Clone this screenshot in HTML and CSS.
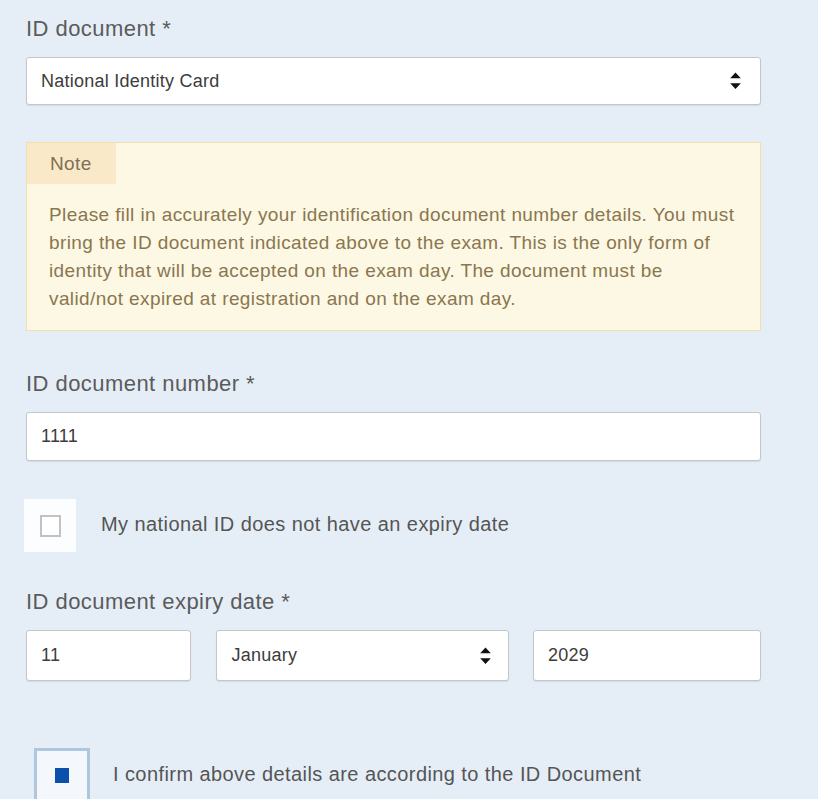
FILE: index.html
```html
<!DOCTYPE html>
<html lang="en">
<head>
<meta charset="utf-8">
<title>ID document</title>
<link rel="stylesheet" href="styles.css">
</head>
<body>
<form class="form">
  <div class="field field-first">
    <div class="label">ID document *</div>
    <div class="select">
      <span class="value">National Identity Card</span>
      <svg class="arrows" width="11" height="18" viewBox="0 0 11 18"><path d="M5.5 0.5 L10.8 6.2 H0.2 Z M0.2 11.3 H10.8 L5.5 17 Z" fill="#111"/></svg>
    </div>
  </div>

  <div class="note">
    <div class="note-tab">Note</div>
    <p class="note-body">Please fill in accurately your identification document number details. You must bring the ID document indicated above to the exam. This is the only form of identity that will be accepted on the exam day. The document must be valid/not expired at registration and on the exam day.</p>
  </div>

  <div class="field field-number">
    <div class="label">ID document number *</div>
    <div class="input"><span class="value">1111</span></div>
  </div>

  <div class="check-row">
    <div class="check-box"><span class="check-square"></span></div>
    <span class="check-label">My national ID does not have an expiry date</span>
  </div>

  <div class="field field-expiry">
    <div class="label">ID document expiry date *</div>
    <div class="date-row">
      <div class="input day"><span class="value">11</span></div>
      <div class="select month">
        <span class="value">January</span>
        <svg class="arrows" width="11" height="18" viewBox="0 0 11 18"><path d="M5.5 0.5 L10.8 6.2 H0.2 Z M0.2 11.3 H10.8 L5.5 17 Z" fill="#111"/></svg>
      </div>
      <div class="input year"><span class="value">2029</span></div>
    </div>
  </div>

  <div class="confirm-row">
    <div class="confirm-box"><span class="confirm-mark"></span></div>
    <span class="check-label">I confirm above details are according to the ID Document</span>
  </div>
</form>
</body>
</html>
```

FILE: styles.css
```css
html, body {
  margin: 0;
  padding: 0;
  background: #e5eef7;
}

body {
  font-family: "Liberation Sans", Arial, sans-serif;
  color: #555;
  overflow: hidden;
}

.form {
  width: 735px;
  padding: 16px 0 0 26px;
}

.label {
  font-size: 22px;
  line-height: 26px;
  letter-spacing: 0.45px;
  color: #5b5b5b;
  margin-bottom: 15px;
}

.select,
.input {
  box-sizing: border-box;
  height: 49px;
  background: #fff;
  border: 1px solid #c4c7ca;
  border-radius: 3px;
  box-shadow: 0 1px 1px rgba(0, 0, 0, 0.08);
  display: flex;
  align-items: center;
  padding: 0 19px 0 14px;
}

.select {
  justify-content: space-between;
  height: 48px;
}

.value {
  font-size: 18px;
  letter-spacing: 0.25px;
  color: #3c3c3c;
}

.arrows {
  display: block;
}

.note {
  margin-top: 37px;
  box-sizing: border-box;
  height: 189px;
  background: #fdf8e3;
  border: 1px solid #f1e0ab;
}

.note-tab {
  display: inline-block;
  box-sizing: border-box;
  width: 89px;
  height: 41px;
  line-height: 41px;
  padding-left: 23px;
  background: #f9e9c9;
  font-size: 19px;
  letter-spacing: 0.4px;
  color: #7f7056;
}

.note-body {
  margin: 0;
  padding: 17px 22px 0 22px;
  font-size: 19px;
  line-height: 28px;
  letter-spacing: 0.4px;
  color: #8a7650;
}

.field-number {
  margin-top: 40px;
}

.check-row {
  margin-top: 38px;
  margin-left: -2px;
  display: flex;
  align-items: center;
}

.check-box {
  width: 52px;
  height: 53px;
  background: #fbfdff;
  display: flex;
  align-items: center;
  justify-content: center;
  flex-shrink: 0;
}

.check-square {
  display: block;
  box-sizing: border-box;
  width: 21px;
  height: 22px;
  border: 2px solid #c2c2c2;
  background: #fff;
}

.check-label {
  font-size: 20px;
  letter-spacing: 0.42px;
  color: #555;
  margin-left: 25px;
  position: relative;
  top: -1px;
}

.field-expiry {
  margin-top: 37px;
}

.date-row {
  display: flex;
  justify-content: space-between;
}

.date-row .input,
.date-row .select {
  height: 51px;
}

.day {
  width: 165px;
}

.month {
  width: 293px;
  padding-left: 15px;
  padding-right: 17px;
}

.year {
  width: 228px;
}

.confirm-row {
  margin-top: 67px;
  margin-left: 8px;
  display: flex;
  align-items: center;
}

.confirm-box {
  box-sizing: border-box;
  width: 56px;
  height: 55px;
  border: 3px solid #aec7dd;
  background: #f4f8fc;
  display: flex;
  align-items: center;
  justify-content: center;
  flex-shrink: 0;
}

.confirm-mark {
  display: block;
  width: 14px;
  height: 15px;
  background: #0b50aa;
}

.confirm-row .check-label {
  margin-left: 23px;
}
```
